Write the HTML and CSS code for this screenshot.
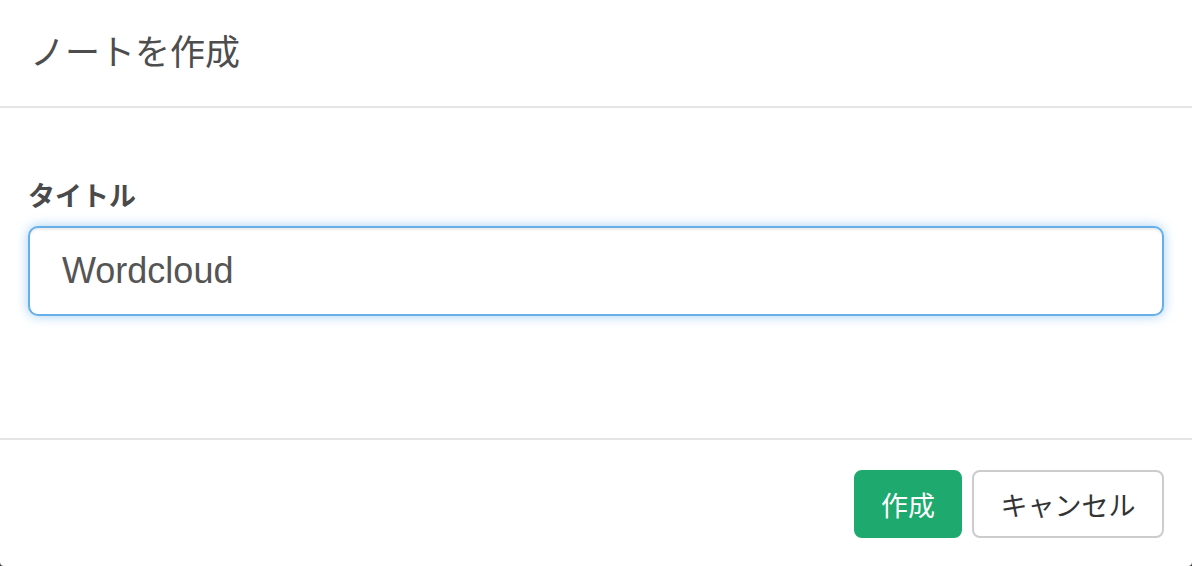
FILE: index.html
```html
<!DOCTYPE html>
<html lang="ja">
<head>
<meta charset="utf-8">
<title>ノートを作成</title>
<link rel="stylesheet" href="styles.css">
</head>
<body>
<div class="modal">
  <div class="modal-header">
    <h4 class="modal-title">ノートを作成</h4>
  </div>
  <div class="modal-body">
    <label class="field-label" for="title">タイトル</label>
    <input id="title" class="field-input" type="text" value="Wordcloud">
  </div>
  <div class="modal-footer">
    <button class="btn btn-primary">作成</button>
    <button class="btn btn-default">キャンセル</button>
  </div>
</div>
</body>
</html>
```

FILE: styles.css
```css
html, body {
  margin: 0;
  padding: 0;
  background: #3a3a3a;
}
body {
  font-family: "Liberation Sans", "Noto Sans CJK JP", sans-serif;
  color: #555;
}
.modal {
  width: 1192px;
  height: 566px;
  background: #fff;
  border-radius: 0 0 4px 4px;
  display: flex;
  flex-direction: column;
  box-sizing: border-box;
}
.modal-header {
  height: 106px;
  border-bottom: 2px solid #e5e5e5;
  padding: 0 30px;
  display: flex;
  align-items: center;
}
.modal-title {
  margin: 0;
  font-family: "Noto Sans CJK JP", sans-serif;
  font-weight: 400;
  font-size: 35px;
  line-height: 40px;
  color: #4d4d4d;
  position: relative;
  top: -3px;
}
.modal-body {
  height: 330px;
  box-sizing: border-box;
  padding: 67px 28px 0;
  display: flex;
  flex-direction: column;
}
.field-label {
  font-family: "Noto Sans CJK JP", sans-serif;
  font-weight: 700;
  font-size: 27px;
  line-height: 40px;
  color: #4a4a4a;
  margin-bottom: 11px;
}
.field-input {
  height: 90px;
  box-sizing: border-box;
  border: 2px solid #66afe9;
  border-radius: 10px;
  padding: 0 32px;
  font-family: "Liberation Sans", sans-serif;
  font-size: 36px;
  color: #555;
  outline: none;
  box-shadow: inset 0 2px 2px rgba(0,0,0,.075), 0 0 12px rgba(102,175,233,.6);
}
.modal-footer {
  flex: 1;
  border-top: 2px solid #e5e5e5;
  padding: 30px 28px 0;
  display: flex;
  justify-content: flex-end;
  align-items: flex-start;
  gap: 10px;
}
.btn {
  height: 68px;
  box-sizing: border-box;
  border-radius: 8px;
  font-family: "Noto Sans CJK JP", sans-serif;
  font-size: 27px;
  padding: 0 24px;
  border: 2px solid transparent;
  cursor: pointer;
}
.btn-primary {
  width: 108px;
  background: #1ea96e;
  border-color: #1ea96e;
  color: #fff;
}
.btn-default {
  width: 192px;
  background: #fff;
  border-color: #ccc;
  color: #333;
}
```
